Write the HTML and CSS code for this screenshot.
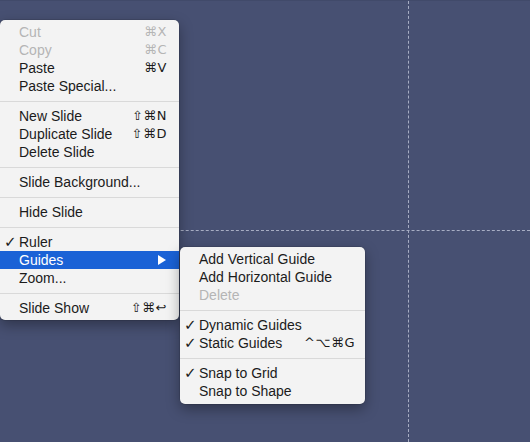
FILE: index.html
```html
<!DOCTYPE html>
<html>
<head>
<meta charset="utf-8">
<link rel="stylesheet" href="styles.css">
</head>
<body>
<div class="canvas">
  <div class="guide guide-v"></div>
  <div class="guide guide-h"></div>

  <div class="menu main-menu">
    <div class="item disabled"><span class="chk"></span><span class="label">Cut</span><span class="key">⌘X</span></div>
    <div class="item disabled"><span class="chk"></span><span class="label">Copy</span><span class="key">⌘C</span></div>
    <div class="item"><span class="chk"></span><span class="label">Paste</span><span class="key">⌘V</span></div>
    <div class="item"><span class="chk"></span><span class="label">Paste Special...</span><span class="key"></span></div>
    <div class="sep"></div>
    <div class="item"><span class="chk"></span><span class="label">New Slide</span><span class="key">⇧⌘N</span></div>
    <div class="item"><span class="chk"></span><span class="label">Duplicate Slide</span><span class="key">⇧⌘D</span></div>
    <div class="item"><span class="chk"></span><span class="label">Delete Slide</span><span class="key"></span></div>
    <div class="sep"></div>
    <div class="item"><span class="chk"></span><span class="label">Slide Background...</span><span class="key"></span></div>
    <div class="sep"></div>
    <div class="item"><span class="chk"></span><span class="label">Hide Slide</span><span class="key"></span></div>
    <div class="sep"></div>
    <div class="item"><span class="chk">✓</span><span class="label">Ruler</span><span class="key"></span></div>
    <div class="item active"><span class="chk"></span><span class="label">Guides</span><span class="key"><span class="arrow"></span></span></div>
    <div class="item"><span class="chk"></span><span class="label">Zoom...</span><span class="key"></span></div>
    <div class="sep"></div>
    <div class="item"><span class="chk"></span><span class="label">Slide Show</span><span class="key">⇧⌘↩</span></div>
  </div>

  <div class="menu sub-menu">
    <div class="item"><span class="chk"></span><span class="label">Add Vertical Guide</span><span class="key"></span></div>
    <div class="item"><span class="chk"></span><span class="label">Add Horizontal Guide</span><span class="key"></span></div>
    <div class="item disabled"><span class="chk"></span><span class="label">Delete</span><span class="key"></span></div>
    <div class="sep"></div>
    <div class="item"><span class="chk">✓</span><span class="label">Dynamic Guides</span><span class="key"></span></div>
    <div class="item"><span class="chk">✓</span><span class="label">Static Guides</span><span class="key">^⌥⌘G</span></div>
    <div class="sep"></div>
    <div class="item"><span class="chk">✓</span><span class="label">Snap to Grid</span><span class="key"></span></div>
    <div class="item"><span class="chk"></span><span class="label">Snap to Shape</span><span class="key"></span></div>
  </div>
</div>
</body>
</html>
```

FILE: styles.css
```css
html, body {
  margin: 0;
  padding: 0;
}
body {
  background: #475072;
  font-family: "Liberation Sans", Arial, "DejaVu Sans", sans-serif;
}
.canvas {
  position: relative;
  width: 530px;
  height: 442px;
  overflow: hidden;
  background: #475072;
  border-top: 1px solid #414a6a;
  box-sizing: border-box;
}
.guide {
  position: absolute;
}
.guide-v {
  left: 408px;
  top: 0;
  bottom: 0;
  width: 0;
  border-left: 1px dashed #a7adc3;
}
.guide-h {
  left: 0;
  right: 0;
  top: 229px;
  height: 0;
  border-top: 1px dashed #a7adc3;
}
.menu {
  position: absolute;
  background: #f3f3f3;
  border-radius: 5px;
  box-shadow: 0 0 0 0.5px rgba(0, 0, 0, 0.18), 0 5px 14px rgba(0, 0, 0, 0.35);
  display: flex;
  flex-direction: column;
}
.main-menu {
  left: 0;
  top: 19px;
  width: 179px;
  padding: 3px 0 3px;
}
.sub-menu {
  left: 180px;
  top: 246px;
  width: 185px;
  padding: 3px 0 4px;
}
.item {
  display: grid;
  grid-template-columns: 19px 1fr auto;
  align-items: center;
  height: 18px;
  line-height: 18px;
  font-size: 14px;
  color: #1b1b1b;
  padding-right: 12px;
  white-space: nowrap;
}
.sub-menu .item {
  padding-right: 10px;
}
.chk {
  font-family: "DejaVu Sans", sans-serif;
  font-size: 15px;
  font-weight: bold;
  padding-left: 4px;
}
.key {
  font-family: "DejaVu Sans", sans-serif;
  font-size: 13px;
  letter-spacing: 0.5px;
  display: flex;
  align-items: center;
}
.disabled {
  color: #b5b5b5;
}
.active {
  background: #1a62d6;
  color: #ffffff;
}
.arrow {
  width: 0;
  height: 0;
  border-top: 5px solid transparent;
  border-bottom: 5px solid transparent;
  border-left: 8px solid #ffffff;
  margin-right: 1px;
}
.sep {
  height: 12px;
  display: flex;
  align-items: center;
}
.sep::before {
  content: "";
  display: block;
  width: 100%;
  height: 1px;
  background: #d9d9d9;
}
```
